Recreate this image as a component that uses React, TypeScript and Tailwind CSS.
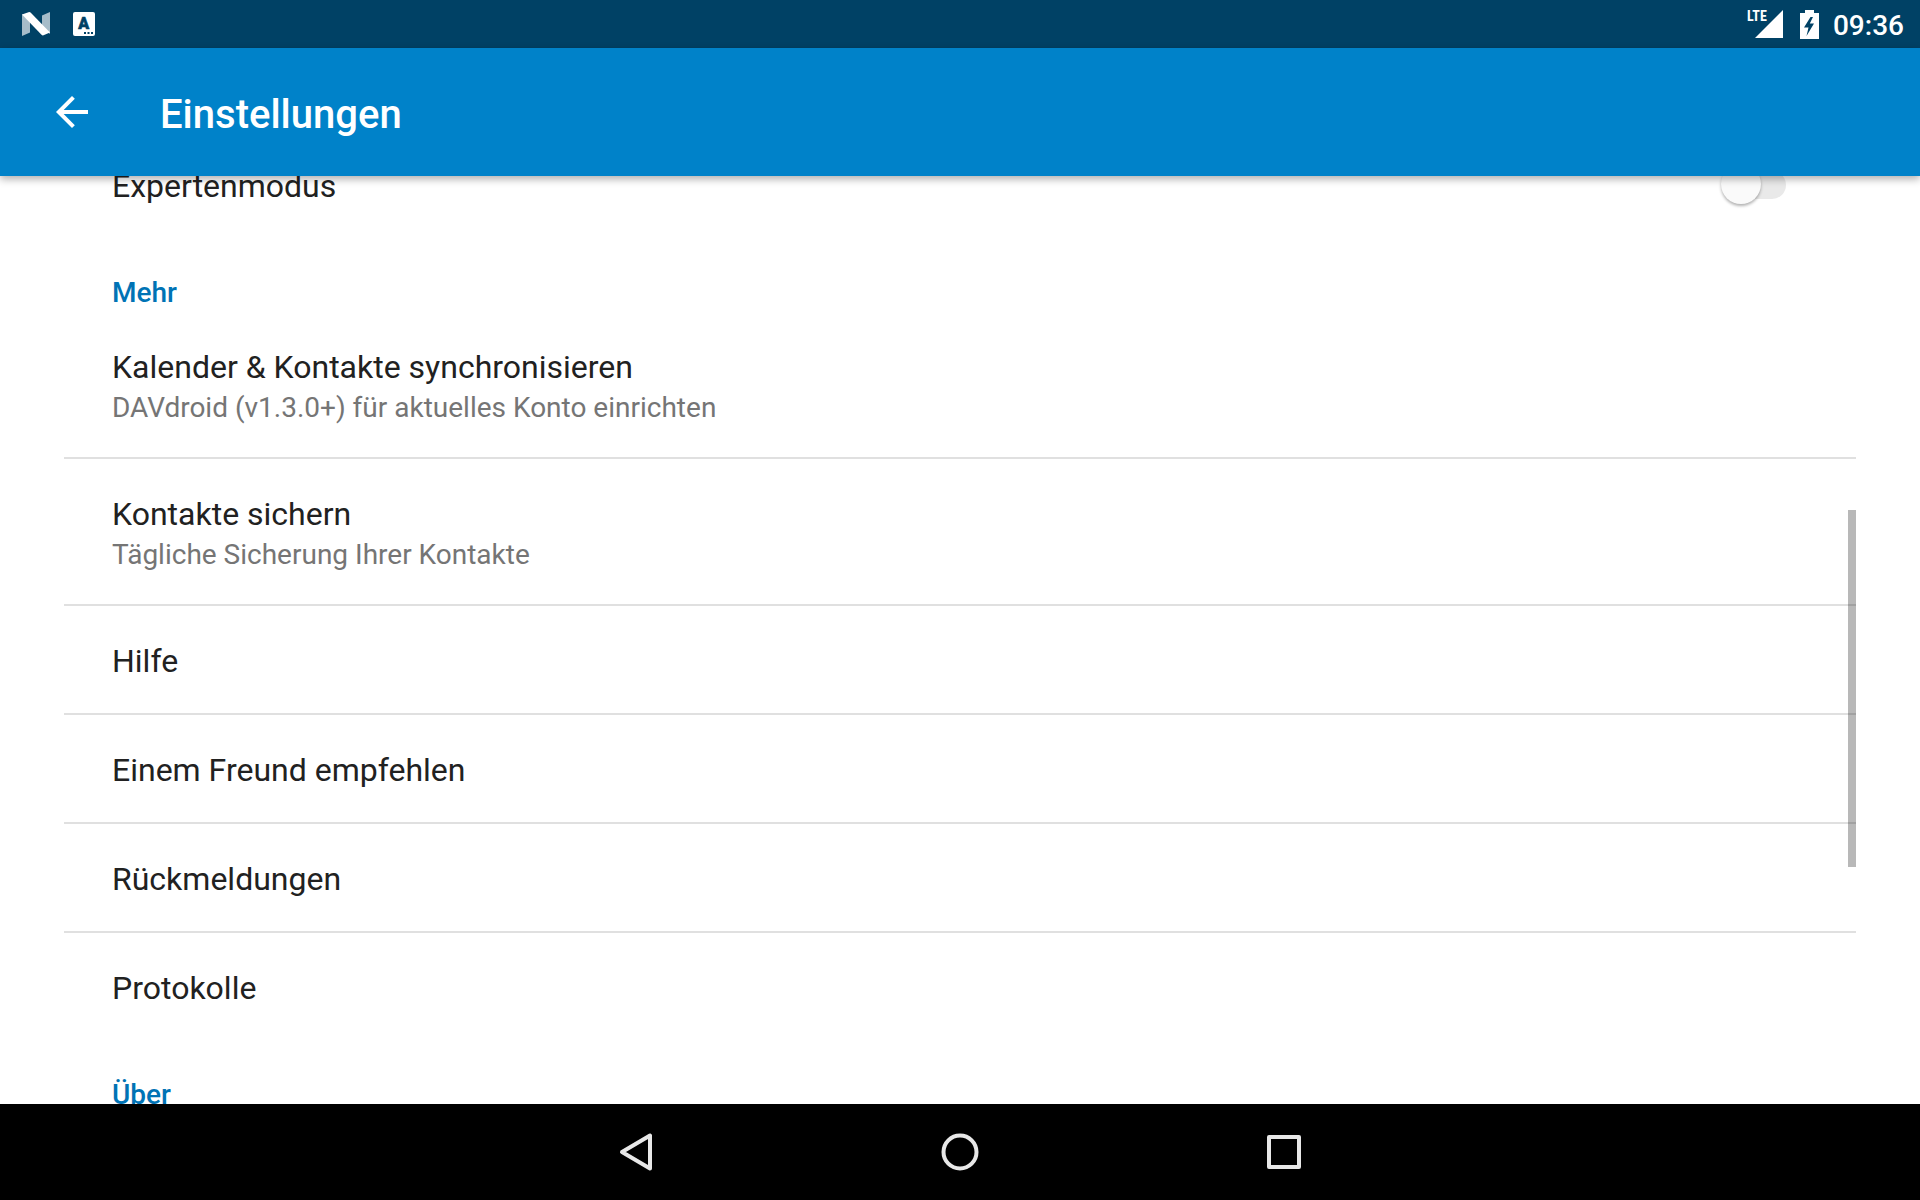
import React from 'react';

type Item = { title: string; summary?: string };

const moreItems: Item[] = [
  { title: 'Kalender & Kontakte synchronisieren', summary: 'DAVdroid (v1.3.0+) für aktuelles Konto einrichten' },
  { title: 'Kontakte sichern', summary: 'Tägliche Sicherung Ihrer Kontakte' },
  { title: 'Hilfe' },
  { title: 'Einem Freund empfehlen' },
  { title: 'Rückmeldungen' },
  { title: 'Protokolle' },
];

function StatusBar() {
  return (
    <div className="flex h-12 shrink-0 items-center justify-between bg-[#004165] pr-4 pl-[22px] text-white">
      <div className="flex items-center gap-[23px]">
        <svg className="h-6 w-7" viewBox="0 0 28 24" fill="currentColor" aria-hidden="true">
          <path d="M0 2 8 8.500V20.500L0 24Z" opacity=".65" />
          <path d="M20 3.500 28 0V22L20 15.500Z" opacity=".65" />
          <path d="M0 2.500 6.500 .2Q7.800-.2 8.800.8L28 20.500 21.500 23.300Q20.500 23.700 19.500 22.800Z" />
        </svg>
        <svg className="h-6 w-[22px]" viewBox="0 0 22 24" aria-hidden="true">
          <rect width="22" height="24" rx="2" fill="#fff" />
          <text x="10.700" y="17" textAnchor="middle" fontSize="16" fontWeight="900" fontFamily="Roboto, sans-serif" fill="#004165" stroke="#004165" strokeWidth=".6">A</text>
          <path d="M11 20h2v2h-2zM14.500 20h2v2h-2zM18 20h2v2h-2z" fill="#004165" />
        </svg>
      </div>
      <div className="flex items-center">
        <svg className="mr-[17px] h-7 w-9" viewBox="0 0 36 28" fill="currentColor" aria-hidden="true">
          <text x="0" y="11" fontSize="14" fontWeight="700" fontFamily="'Liberation Sans Narrow', 'Roboto Condensed', 'Open Sans Condensed', Roboto, sans-serif">LTE</text>
          <path d="M36 0V28H8Z" />
        </svg>
        <svg className="mr-3.5 h-[29px] w-[19px]" viewBox="0 0 19 29" aria-hidden="true">
          <path d="M5 0h9v3h5v26H0V3h5Z" fill="#fff" />
          <path d="M10.500 7 4 17.500h4.500L6.500 26 14 13.500H9.800L13 7Z" fill="#004165" />
        </svg>
        <time className="pt-1 text-[28px] leading-8 font-medium">09:36</time>
      </div>
    </div>
  );
}

function Category({ children }: { children: React.ReactNode }) {
  return <h2 className="px-12 pt-[39px] pb-[3px] text-[28px] leading-8 font-medium text-[#0073b5]">{children}</h2>;
}

function PreferenceRow({ title, summary }: Item) {
  return (
    <button type="button" className={summary ? 'block w-full px-12 pt-[35px] pb-7 text-left' : 'block w-full px-12 pt-[35px] pb-8 text-left'}>
      <span className="block text-[32px] leading-10 text-[#212121]">{title}</span>
      {summary && <span className="block text-[28px] leading-[42px] text-[#757575]">{summary}</span>}
    </button>
  );
}

export default function App() {
  return (
    <div className="flex h-screen flex-col overflow-hidden bg-white font-['Roboto',sans-serif]">
      <StatusBar />
      <header className="relative z-10 flex h-32 shrink-0 items-center gap-16 bg-[#0082c9] px-12 text-white shadow-[0_3px_8px_rgba(0,0,0,0.32)]">
        <button type="button" aria-label="Zurück">
          <svg className="size-12" viewBox="0 0 24 24" fill="currentColor" aria-hidden="true">
            <path d="M20 11H7.830l5.590-5.590L12 4l-8 8 8 8 1.410-1.410L7.830 13H20v-2z" />
          </svg>
        </button>
        <h1 className="pt-1.5 text-[40px] leading-12 font-medium">Einstellungen</h1>
      </header>

      <main className="relative min-h-0 flex-1 overflow-hidden px-16">
        <div className="-mt-[45px]">
          <div className="flex items-center justify-between pr-[70px] pl-12">
            <label htmlFor="expert" className="pt-[35px] pb-8 text-[32px] leading-10 text-[#212121]">Expertenmodus</label>
            <input
              id="expert"
              type="checkbox"
              role="switch"
              className="relative h-7 w-[62px] appearance-none rounded-full bg-[#e9e9e9] before:absolute before:-top-[7px] before:-left-[3px] before:size-10 before:rounded-full before:bg-[#fafafa] before:shadow-[0_2px_3px_rgba(0,0,0,0.3)] checked:before:left-[26px]"
            />
          </div>
          <Category>Mehr</Category>
          <ul className="divide-y-2 divide-[#e0e0e0]">
            {moreItems.map((item) => (
              <li key={item.title}>
                <PreferenceRow {...item} />
              </li>
            ))}
          </ul>
          <Category>Über</Category>
        </div>
        <div className="absolute top-[36%] right-16 h-[357px] w-2 bg-black/28" />
      </main>

      <nav className="relative flex h-24 shrink-0 justify-center bg-black text-[#e8e8e8]">
        <button type="button" aria-label="Zurück" className="flex w-[324px] items-center justify-center">
          <svg className="size-10" viewBox="0 0 40 40" fill="none" stroke="currentColor" strokeWidth="4" strokeLinejoin="round" aria-hidden="true">
            <path d="M34 3.500V36.500L6 20Z" />
          </svg>
        </button>
        <button type="button" aria-label="Startseite" className="flex w-[324px] items-center justify-center">
          <svg className="size-10" viewBox="0 0 40 40" fill="none" stroke="currentColor" strokeWidth="4" aria-hidden="true">
            <circle cx="20" cy="20" r="16.500" />
          </svg>
        </button>
        <button type="button" aria-label="Übersicht" className="flex w-[324px] items-center justify-center">
          <svg className="size-10" viewBox="0 0 40 40" fill="none" stroke="currentColor" strokeWidth="4" strokeLinejoin="round" aria-hidden="true">
            <path d="M5 5H35V35H5Z" />
          </svg>
        </button>
      </nav>
    </div>
  );
}
